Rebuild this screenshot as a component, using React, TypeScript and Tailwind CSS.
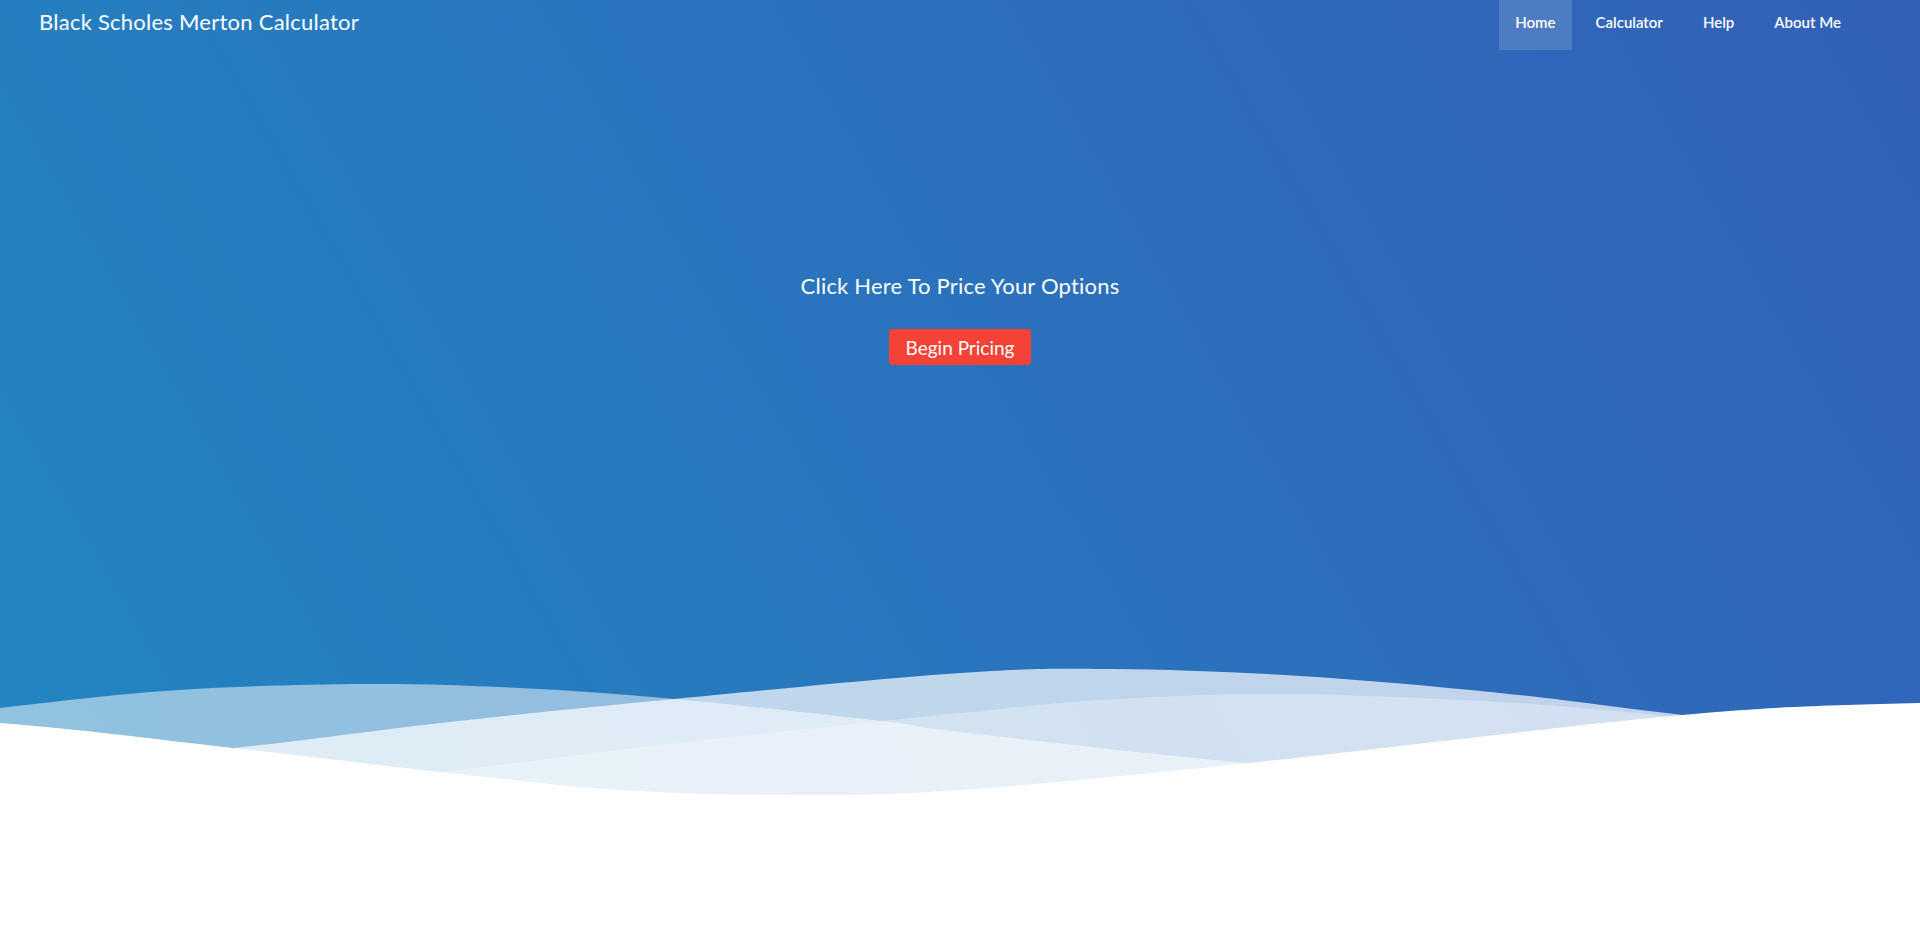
import React from 'react';

type Pt = [number, number];

// smooth path through points (catmull-rom -> cubic bezier), closed down to the svg bottom
const wavePath = (pts: Pt[], bottom: number) => {
  let d = `M${pts[0][0]},${pts[0][1]}`;
  for (let i = 0; i < pts.length - 1; i++) {
    const p0 = pts[i - 1] || pts[i];
    const p1 = pts[i];
    const p2 = pts[i + 1];
    const p3 = pts[i + 2] || p2;
    const c1x = p1[0] + (p2[0] - p0[0]) / 6;
    const c1y = p1[1] + (p2[1] - p0[1]) / 6;
    const c2x = p2[0] - (p3[0] - p1[0]) / 6;
    const c2y = p2[1] - (p3[1] - p1[1]) / 6;
    d += ` C${c1x},${c1y} ${c2x},${c2y} ${p2[0]},${p2[1]}`;
  }
  const last = pts[pts.length - 1];
  d += ` L${last[0]},${bottom} L${pts[0][0]},${bottom} Z`;
  return d;
};

const waveBack: Pt[] = [
  [-300, 745], [0, 708], [180, 690], [367, 684], [520, 688], [674, 699], [882, 721],
  [960, 732], [1248, 763], [1500, 778], [1900, 790], [2200, 790],
];
const waveMid: Pt[] = [
  [-200, 775], [50, 762], [233, 748], [450, 722], [674, 699], [960, 673], [1113, 669],
  [1300, 676], [1500, 693], [1682, 715], [1920, 742], [2200, 760],
];
const waveLight: Pt[] = [
  [-200, 810], [200, 800], [441, 772], [660, 745], [882, 721], [960, 713], [1100, 700],
  [1278, 694], [1500, 702], [1667, 716], [1920, 745], [2200, 770],
];
const waveFront: Pt[] = [
  [-300, 706], [0, 723], [233, 748], [441, 772], [620, 790], [796, 795], [960, 790],
  [1248, 763], [1682, 715], [1920, 703], [2200, 699],
];

const Waves = () => (
  <svg
    className="block w-full h-[140px] shrink-0"
    viewBox="0 660 1920 140"
    preserveAspectRatio="none"
  >
    <path d={wavePath(waveBack, 800)} fill="rgba(255,255,255,0.5)" />
    <path d={wavePath(waveMid, 800)} fill="rgba(255,255,255,0.7)" />
    <path d={wavePath(waveLight, 800)} fill="rgba(255,255,255,0.3)" />
    <path d={wavePath(waveFront, 800)} fill="#ffffff" />
  </svg>
);

const App = () => {
  const links = ['Home', 'Calculator', 'Help', 'About Me'];

  return (
    <div className="min-h-screen bg-white font-['Lato',sans-serif]">
      <section className="h-[800px] flex flex-col bg-[linear-gradient(60deg,#2286c1_0%,#3360b8_100%)] text-white">
        {/* Navbar */}
        <header className="h-[50px] flex items-center justify-between pl-[39px] pr-[63px]">
          <a href="#" className="text-[22px] leading-none pb-[6px] tracking-[0.25px]">
            Black Scholes Merton Calculator
          </a>
          <nav className="flex items-stretch h-full gap-2">
            {links.map((l, i) => (
              <a
                key={l}
                href="#"
                className={
                  i === 0
                    ? 'flex items-center px-4 pb-[6px] text-[15px] font-semibold bg-white/15'
                    : 'flex items-center px-4 pb-[6px] text-[15px] font-semibold'
                }
              >
                {l}
              </a>
            ))}
          </nav>
        </header>

        {/* Hero */}
        <div className="flex flex-col items-center pt-[221px]">
          <h1 className="text-[22px] leading-[30px] tracking-[0.2px]">Click Here To Price Your Options</h1>
          <button className="mt-[28px] h-[36px] w-[142px] rounded-[4px] bg-[#f44336] text-[19px] leading-none text-white">
            Begin Pricing
          </button>
        </div>

        <div className="mt-auto">
          <Waves />
        </div>
      </section>
    </div>
  );
};

export default App;
